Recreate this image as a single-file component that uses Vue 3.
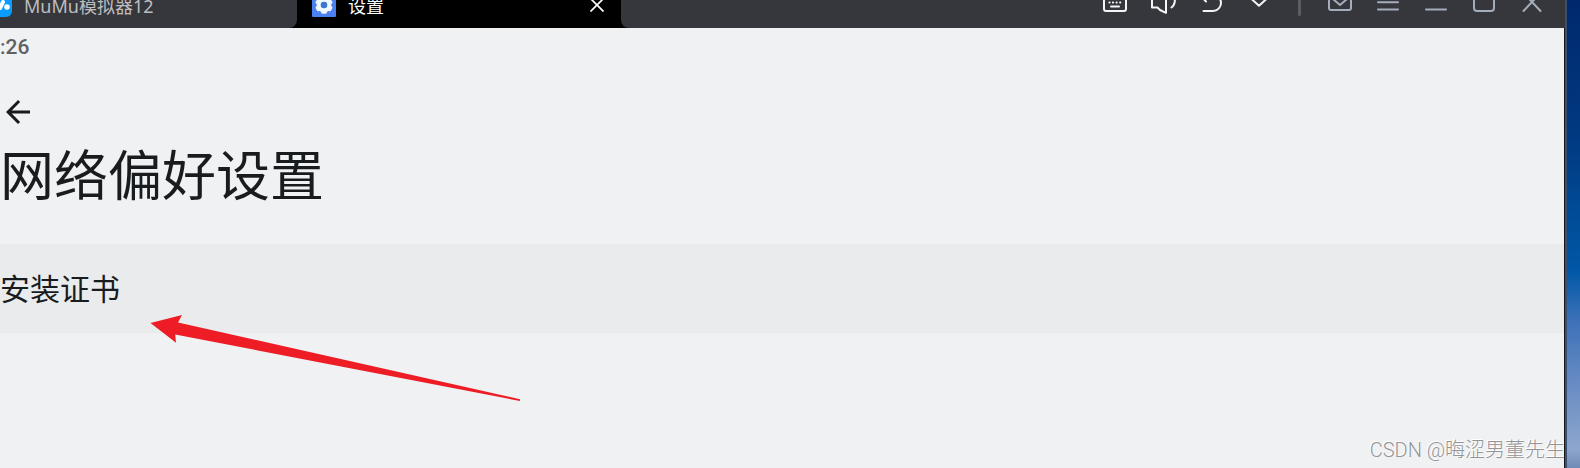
<template>
  <div class="desktop">
    <div class="window">
      <header class="title-bar">
        <nav class="tabs" aria-label="窗口">
          <button class="tab" type="button">
            <svg class="tab-icon" width="24" height="24" viewBox="0 0 24 24" aria-hidden="true">
              <rect width="24" height="24" rx="6" fill="#0a9bff" />
              <g stroke="#fff" stroke-width="4" stroke-linecap="round">
                <line x1="5" y1="15" x2="8" y2="9" />
                <line x1="12" y1="15" x2="15" y2="9" />
              </g>
              <circle cx="19" cy="14" r="2.8" fill="#fff" />
            </svg>
            <span class="tab-label">MuMu模拟器12</span>
          </button>
          <div class="tab active">
            <svg class="tab-icon" width="24" height="24" viewBox="0 0 24 24" aria-hidden="true">
              <rect width="24" height="24" rx="1" fill="#4a80f0" />
              <circle cx="12" cy="12" r="5.2" fill="none" stroke="#f1f7ff" stroke-width="4.4" />
              <g fill="#f1f7ff">
                <rect
                  v-for="angle in gearAngles"
                  :key="angle"
                  x="9.2"
                  y="3.2"
                  width="5.6"
                  height="5"
                  rx="1.6"
                  :transform="`rotate(${angle} 12 12)`"
                />
              </g>
              <circle cx="12" cy="12" r="3.3" fill="#3f76d0" />
            </svg>
            <span class="tab-label">设置</span>
            <button class="tab-close" type="button" aria-label="关闭标签">
              <svg width="14" height="14" viewBox="0 0 14 14" fill="none" stroke="currentColor" stroke-width="1.7">
                <path d="M0.5 0.5 13.5 13.5M13.5 0.5 0.5 13.5" />
              </svg>
            </button>
          </div>
        </nav>

        <div class="controls">
          <template v-for="control in controls" :key="control.name">
            <span v-if="control.divided" class="divider"></span>
            <button
              class="control"
              :class="{ muted: control.muted }"
              type="button"
              :aria-label="control.name"
            >
              <svg width="48" height="56" viewBox="-24 -28 48 56">
                <path v-for="d in control.paths" :key="d" :d="d" />
              </svg>
            </button>
          </template>
        </div>
      </header>

      <main class="screen">
        <div class="status">:26</div>
        <button class="back" type="button" aria-label="返回">
          <svg width="36" height="36" viewBox="0 0 24 24" fill="currentColor">
            <path d="M20 11H7.83l5.59-5.59L12 4l-8 8 8 8 1.41-1.41L7.83 13H20v-2z" />
          </svg>
        </button>
        <h1>网络偏好设置</h1>
        <button class="preference" type="button">安装证书</button>
      </main>
    </div>

    <svg class="pointer" width="370" height="88" viewBox="0 0 370 88" aria-hidden="true">
      <path d="M0.5 8 32 0 28 7.5 370 84.2V86L25.2 19.5 26 27.8Z" fill="#ee1c25" />
    </svg>
    <span class="watermark">CSDN @晦涩男董先生</span>
  </div>
</template>

<script setup>
const gearAngles = [0, 60, 120, 180, 240, 300]

const controls = [
  {
    name: '键盘',
    paths: [
      'M-9-11H9a2 2 0 0 1 2 2V9a2 2 0 0 1-2 2H-9a2 2 0 0 1-2-2V-9a2 2 0 0 1 2-2Z',
      'M-5.6 2.5h.2M-2.1 2.5h.2M1.5 2.5h.2M5.1 2.5h.2',
      'M-4 6.5H4'
    ]
  },
  {
    name: '音量',
    paths: ['M-11-7V7.5H-5.5L-3 10 3 12.8V-12.8L-3-10-5.5-7Z', 'M8.5 7.5C13 4 13-4 8.5-7.5']
  },
  {
    name: '撤销',
    paths: ['M-7.5 11H2A8 8 0 0 0 2-5H-8', 'M-5 1.5-11-5-5-11']
  },
  { name: '展开', paths: ['M-8.5-2 0 5.8 8.5-2'] },
  {
    name: '消息',
    muted: true,
    divided: true,
    paths: [
      'M-9-10H9a2 2 0 0 1 2 2V8a2 2 0 0 1-2 2H-9a2 2 0 0 1-2-2V-8a2 2 0 0 1 2-2Z',
      'M-7-1 0 5 7-1'
    ]
  },
  { name: '菜单', muted: true, paths: ['M-10-5H10M-10 2.3H10M-10 9.5H10'] },
  { name: '最小化', muted: true, paths: ['M-10 9.5H10'] },
  {
    name: '最大化',
    muted: true,
    paths: ['M-7-9H7a3 3 0 0 1 3 3V8a3 3 0 0 1-3 3H-7a3 3 0 0 1-3-3V-6a3 3 0 0 1 3-3Z']
  },
  { name: '关闭', muted: true, paths: ['M-8.5-7 8.5 11M8.5-7-8.5 11'] }
]
</script>

<style>
body {
  margin: 0;
}
</style>

<style scoped>
.desktop {
  position: relative;
  box-sizing: border-box;
  min-height: 100vh;
  display: flex;
  padding-right: 13px;
  background: linear-gradient(#00286c 0%, #003a82 30%, #0058a6 58%, #3a70b8 68%, #6288c2 80%, #8da6cd 96%, #6f8ab4 100%);
  font-family: "Noto Sans", "Noto Sans CJK SC", sans-serif;
}

button {
  padding: 0;
  border: 0;
  background: none;
  color: inherit;
  font: inherit;
}

.window {
  flex: 1;
  display: flex;
  flex-direction: column;
  background: #36373c;
  border-right: 2px solid #3b506e;
}

.title-bar {
  height: 28px;
  display: flex;
  justify-content: space-between;
  align-items: flex-end;
  overflow: hidden;
  background: linear-gradient(90deg, #000 50%, #36373c 50%);
}

.tabs {
  display: flex;
  flex: none;
}

.tab {
  box-sizing: border-box;
  width: 297px;
  height: 46px;
  display: flex;
  align-items: center;
  gap: 12px;
  padding-right: 17px;
  border-bottom-right-radius: 8px;
  background: #36373c;
  color: #bdbdbf;
  font-size: 18px;
  line-height: 24px;
}

.tab:first-child .tab-icon {
  margin-left: -12px;
}

.tab.active {
  width: 324px;
  padding-left: 15px;
  border-radius: 0;
  background: #000;
  color: #fff;
}

.tab-icon {
  flex: none;
}

.tab-label {
  padding-top: 2px;
}

.tab-close {
  display: flex;
  margin-left: auto;
}

.controls {
  flex: 1;
  display: flex;
  justify-content: flex-end;
  align-items: center;
  height: 56px;
  padding-right: 9px;
  border-bottom-left-radius: 8px;
  background: #36373c;
}

.control {
  display: flex;
  color: #f4f5f6;
}

.control.muted {
  color: #a4adbb;
}

.control svg {
  fill: none;
  stroke: currentColor;
  stroke-width: 2;
  stroke-linecap: round;
  stroke-linejoin: round;
}

.divider {
  width: 3px;
  height: 32px;
  margin: 0 15px;
  border-radius: 2px;
  background: #5c5d62;
}

.screen {
  flex: 1;
  display: flex;
  flex-direction: column;
  align-items: flex-start;
  border-right: 1px solid #14171a;
  background: #eff1f3;
  color: #191c1e;
  font-family: "Noto Sans CJK SC", sans-serif;
}

.status {
  padding: 7px 0;
  color: #5f6163;
  font-family: Roboto, sans-serif;
  font-size: 21px;
  font-weight: 500;
  line-height: 24px;
}

.back {
  display: flex;
  margin-top: 28px;
}

h1 {
  margin: 7px 0 35px;
  font-size: 54px;
  font-weight: 400;
  line-height: 72px;
}

.preference {
  width: 100%;
  padding: 23px 0 25px;
  background: #eaebed;
  font-size: 30px;
  line-height: 41px;
  text-align: left;
}

.pointer {
  position: absolute;
  top: 315px;
  left: 150px;
}

.watermark {
  position: absolute;
  right: 15px;
  bottom: 3px;
  color: #949597;
  font-family: Roboto, "Noto Sans CJK SC", sans-serif;
  font-size: 20px;
  font-weight: 300;
  line-height: 30px;
  text-shadow: -1px -1px 0 #fff;
}
</style>
